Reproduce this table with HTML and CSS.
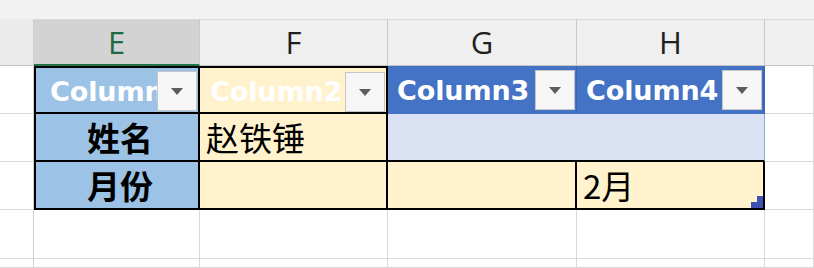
FILE: index.html
```html
<!DOCTYPE html>
<html lang="zh">
<head>
<meta charset="utf-8">
<link rel="stylesheet" href="styles.css">
</head>
<body>
<div class="sheet">
  <div class="strip"></div>
  <div class="corner"></div>
  <div class="colhead sel">E</div>
  <div class="colhead">F</div>
  <div class="colhead">G</div>
  <div class="colhead">H</div>
  <div class="colhead rest"></div>

  <div class="rowhead"></div>
  <div class="cell th th-e left top"><span class="thtext">Column1</span><span class="dd"><i></i></span></div>
  <div class="cell th th-f top"><span class="thtext">Column2</span><span class="dd"><i></i></span></div>
  <div class="cell th th-blue"><span class="thtext">Column3</span><span class="dd"><i></i></span></div>
  <div class="cell th th-blue last"><span class="thtext">Column4</span><span class="dd"><i></i></span></div>
  <div class="grid"></div>

  <div class="rowhead"></div>
  <div class="cell blue left label">姓名</div>
  <div class="cell cream text">赵铁锤</div>
  <div class="cell merged"></div>
  <div class="grid"></div>

  <div class="rowhead"></div>
  <div class="cell blue left label">月份</div>
  <div class="cell cream"></div>
  <div class="cell cream"></div>
  <div class="cell cream text active">2月<span class="handle"></span></div>
  <div class="grid"></div>

  <div class="rowhead"></div>
  <div class="grid"></div>
  <div class="grid"></div>
  <div class="grid"></div>
  <div class="grid"></div>
  <div class="grid"></div>

  <div class="rowhead"></div>
  <div class="grid"></div>
  <div class="grid"></div>
  <div class="grid"></div>
  <div class="grid"></div>
  <div class="grid"></div>
</div>
</body>
</html>
```
FILE: styles.css
```css
html, body {
  margin: 0;
  padding: 0;
  background: #ffffff;
}
body {
  width: 814px;
  height: 268px;
  overflow: hidden;
  font-family: "Noto Sans CJK SC", sans-serif;
}
.sheet {
  display: grid;
  grid-template-columns: 34px 166px 188px 189px 188px 1fr;
  grid-template-rows: 19px 47px 48px 48px 48px 49px 9px;
  width: 814px;
  height: 268px;
}
.strip {
  grid-column: 1 / -1;
  background: #f2f2f2;
}
.corner {
  background: #ebebeb;
  border-right: 1px solid #cfcfcf;
  border-bottom: 1px solid #c4c4c4;
  box-sizing: border-box;
}
.colhead {
  box-sizing: border-box;
  background: #efefef;
  border-top: 1px solid #dadada;
  border-right: 1px solid #c9c9c9;
  border-bottom: 1px solid #c4c4c4;
  display: flex;
  align-items: center;
  justify-content: center;
  font-family: "Open Sans", "Noto Sans", sans-serif;
  font-size: 31px;
  font-weight: 400;
  color: #1f1f1f;
  line-height: 1;
}
.colhead.sel {
  background: #d3d3d3;
  color: #1e6b43;
  border-bottom: 2px solid #217346;
}
.colhead.rest {
  border-right: none;
}
.rowhead {
  box-sizing: border-box;
  background: #ffffff;
  border-right: 1px solid #d0d0d0;
  border-bottom: 1px solid #d9d9d9;
}
.grid {
  box-sizing: border-box;
  border-right: 1px solid #d9d9d9;
  border-bottom: 1px solid #d9d9d9;
}
.cell {
  box-sizing: border-box;
  position: relative;
  border-right: 2px solid #000;
  border-bottom: 2px solid #000;
  display: flex;
  align-items: center;
  overflow: hidden;
  white-space: nowrap;
}
.cell.left { border-left: 2px solid #000; }
.cell.top { border-top: 2px solid #000; }
.th {
  font-family: "DejaVu Sans", sans-serif;
  font-weight: 700;
  font-size: 27px;
  color: #ffffff;
  padding-left: 10px;
}
.th-e {
  background: #9cc3e6;
  padding-left: 14px;
}
.th-f {
  background: #fff2cc;
}
.th-blue {
  background: #4472c4;
  border-right: 1px solid #3a62ad;
  border-bottom: 1px solid #4472c4;
  padding-left: 9px;
}
.th-blue.last {
  border-right: 2px solid #3c66b4;
}
.thtext {
  letter-spacing: -0.1px;
  padding-top: 2px;
}
.dd {
  position: absolute;
  right: 1px;
  top: 4px;
  width: 40px;
  height: 40px;
  box-sizing: border-box;
  background: #f6f6f6;
  border: 1px solid #c6c6c6;
  display: flex;
  align-items: center;
  justify-content: center;
}
.th-e .dd { top: 3px; }
.dd i {
  display: block;
  width: 0;
  height: 0;
  border-left: 6px solid transparent;
  border-right: 6px solid transparent;
  border-top: 7px solid #5d5d5d;
}
.blue {
  background: #9cc3e6;
}
.cream {
  background: #fff2cc;
}
.merged {
  grid-column: span 2;
  background: #d9e1f2;
  border-right: 1px solid #8eaadb;
}
.label {
  justify-content: center;
  font-weight: 700;
  font-size: 33px;
  color: #000;
  padding-left: 6px;
}
.text {
  font-size: 33px;
  font-weight: 400;
  color: #000;
  padding-left: 6px;
}
.active {
  font-size: 33px;
}
.handle {
  position: absolute;
  right: 0;
  bottom: 0;
  width: 12px;
  height: 12px;
  background:
    linear-gradient(#3f51b5, #3f51b5) right bottom / 12px 6px no-repeat,
    linear-gradient(#3f51b5, #3f51b5) right bottom / 6px 12px no-repeat;
}
```
